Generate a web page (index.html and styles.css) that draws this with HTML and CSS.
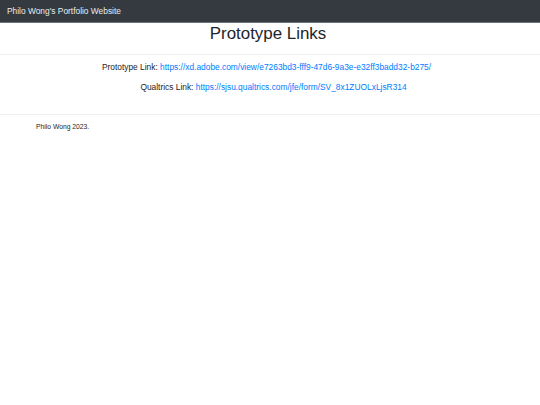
FILE: index.html
```html
<!DOCTYPE html>
<html>
<head>
<meta charset="utf-8">
<link rel="stylesheet" href="styles.css">
</head>
<body>
<nav class="navbar"><span class="brand">Philo Wong's Portfolio Website</span></nav>
<h1 class="title">Prototype Links</h1>
<hr class="rule">
<div class="links">
  <p class="line-proto">Prototype Link: <a href="#">https://xd.adobe.com/view/e7263bd3-fff9-47d6-9a3e-e32ff3badd32-b275/</a></p>
  <p class="line-qual">Qualtrics Link: <a href="#">https://sjsu.qualtrics.com/jfe/form/SV_8x1ZUOLxLjsR314</a></p>
</div>
<hr class="rule">
<footer class="footer">Philo Wong 2023.</footer>
</body>
</html>
```
FILE: styles.css
```css
html, body { margin: 0; padding: 0; background: #fff; }
body { font-family: "Liberation Sans", Arial, sans-serif; color: #212529; }
.navbar { height: 23px; background: #343a40; border-bottom: 1px solid #6c757d; box-sizing: border-box; display: flex; align-items: center; padding: 0 7px; }
.brand { color: #e9ecef; font-size: 8.4px; }
.title { margin: 0; padding: 1px 4px 0 0; font-size: 16.9px; font-weight: 400; text-align: center; line-height: 20px; }
.rule { margin: 10px 0 0; border: 0; border-top: 1px solid #eceeef; }
.links { padding-top: 7px; padding-bottom: 2px; text-align: center; font-size: 8.4px; }
.links p { margin: 0 0 9px; line-height: 11px; }
.line-proto { padding-right: 7px; }
.line-qual { padding-left: 7px; }
.links a { color: #007bff; text-decoration: none; }
.footer { padding: 8px 36px; font-size: 6.75px; line-height: 8px; color: #212529; }
```
